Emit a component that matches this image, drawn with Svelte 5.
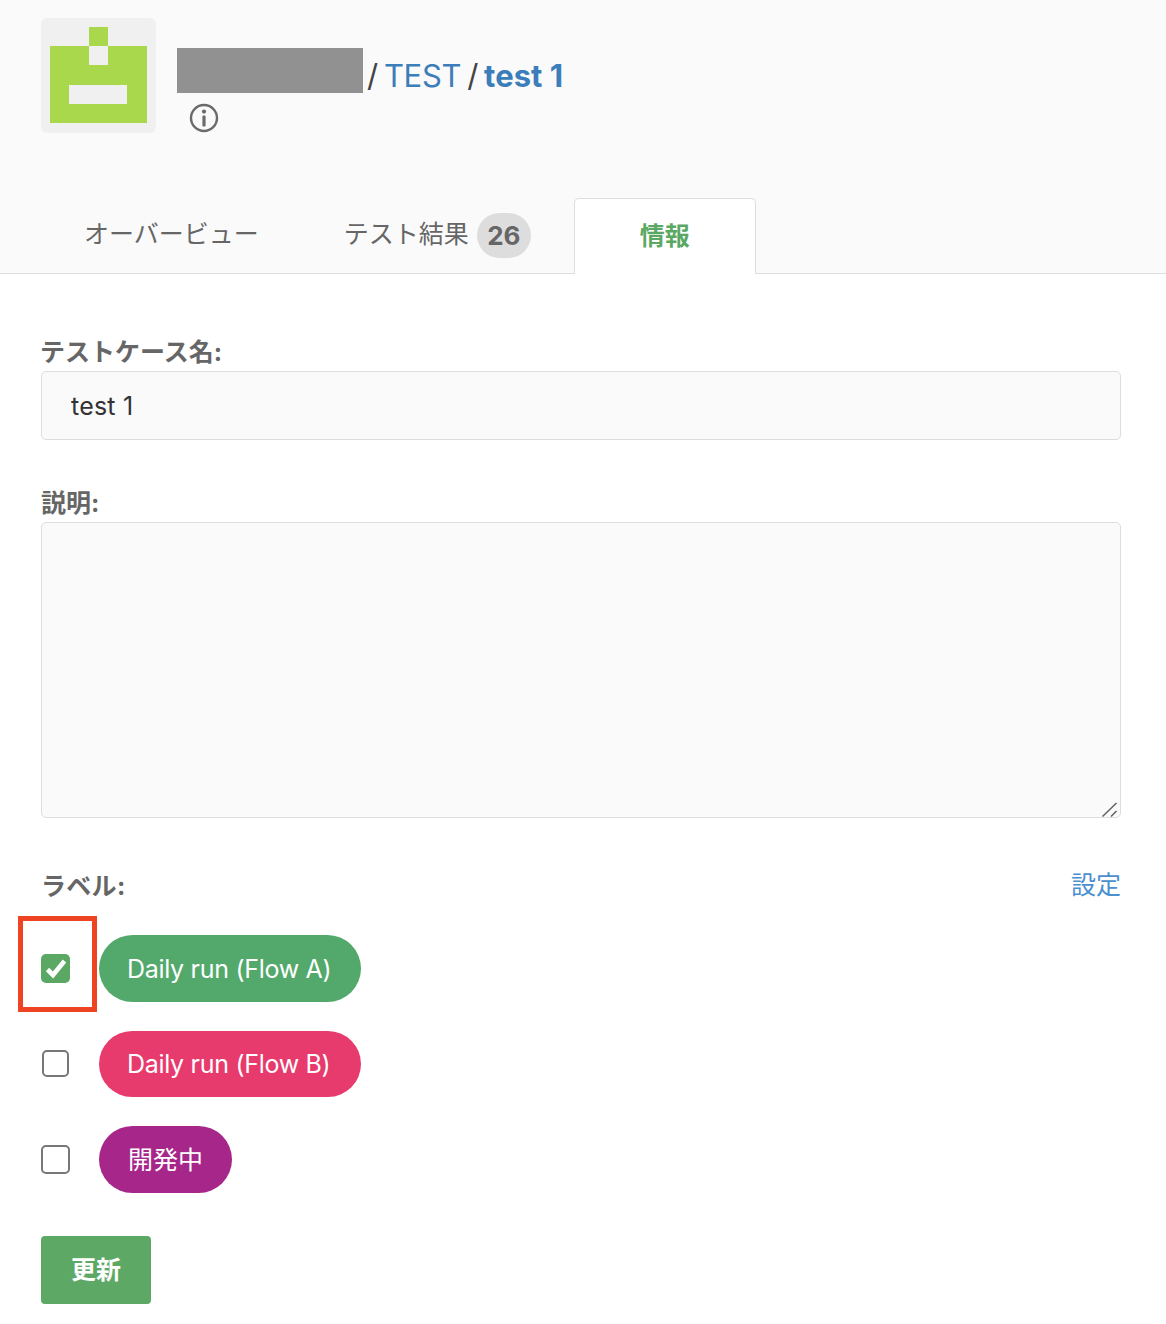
<script>
  const labels = [
    { name: 'Daily run (Flow A)', color: 'green', checked: true, latin: true },
    { name: 'Daily run (Flow B)', color: 'pink', checked: false, latin: true },
    { name: '開発中', color: 'purple', checked: false, latin: false }
  ];
</script>

<div class="page">
  <header class="head">
    <div class="top">
      <div class="avatar">
        <svg width="97" height="96" viewBox="0 0 97 96" shape-rendering="crispEdges">
          <path fill="#a9d84c" d="M39 0h19v19H39zM0 19h39v19h19V19h39v77H0zM19 58v19h58V58z" />
        </svg>
      </div>
      <div class="titles">
        <div class="crumbs">
          <span class="redact"></span>
          <span class="path">
            <span class="sep">/</span>
            <span class="link">TEST</span>
            <span class="sep">/</span>
            <span class="link strong">test 1</span>
          </span>
        </div>
        <svg class="info" width="30" height="30" viewBox="0 0 30 30">
          <circle cx="15" cy="15" r="13" fill="none" stroke="#6b6b6b" stroke-width="2.4" />
          <circle cx="15" cy="8.6" r="2.1" fill="#6b6b6b" />
          <rect x="13.4" y="12.5" width="3.2" height="11" rx="1" fill="#6b6b6b" />
        </svg>
      </div>
    </div>
    <nav class="tabs">
      <div class="tab">オーバービュー</div>
      <div class="tab">テスト結果<span class="count">26</span></div>
      <div class="tab active">情報</div>
    </nav>
  </header>

  <main class="form">
    <label class="lbl first" for="name">テストケース名:</label>
    <input id="name" class="field" value="test 1" />

    <label class="lbl second" for="desc">説明:</label>
    <div class="areawrap">
      <textarea id="desc" class="field area"></textarea>
      <svg class="grip" width="18" height="18" viewBox="0 0 18 18">
        <path d="M1.5 16.5L15.5 3M10 16.5L15.5 11" stroke="#666" stroke-width="1.6" fill="none" />
      </svg>
    </div>

    <div class="lblrow">
      <span class="lbl plain">ラベル:</span>
      <span class="cfg">設定</span>
    </div>

    <div class="rows">
      {#each labels as l, i}
        <div class="row" class:mid={i === 1}>
          <span class="box" class:on={l.checked}>
            {#if l.checked}
              <svg width="29" height="29" viewBox="0 0 29 29">
                <path d="M6.5 15.5L12 21L23.5 7" fill="none" stroke="#fff" stroke-width="4.6" />
              </svg>
              <span class="mark"></span>
            {/if}
          </span>
          <span class="pill {l.color}" class:latin={l.latin}>
            <span class:cjk={!l.latin}>{l.name}</span>
          </span>
        </div>
      {/each}
    </div>

    <button class="submit">更新</button>
  </main>
</div>

<style>
  :global(body) {
    margin: 0;
    background: #fff;
  }
  .page {
    font-family: Inter, "Noto Sans CJK JP", sans-serif;
    color: #333;
    width: 1166px;
  }
  .head {
    background: #fafafa;
    height: 273px;
    border-bottom: 1px solid #ddd;
    display: flex;
    flex-direction: column;
    justify-content: space-between;
    box-sizing: content-box;
  }
  .top {
    display: flex;
    padding: 18px 41px 0;
    gap: 21px;
  }
  .avatar {
    width: 115px;
    height: 115px;
    background: #f0f0f0;
    border-radius: 6px;
    display: flex;
    justify-content: center;
    padding-top: 9px;
    box-sizing: border-box;
  }
  .titles {
    padding-top: 30px;
  }
  .crumbs {
    display: flex;
    align-items: center;
    gap: 4px;
    font-size: 31px;
    height: 45px;
    letter-spacing: -0.3px;
  }
  .path {
    display: flex;
    gap: 6px;
    padding-top: 9px;
  }
  .redact {
    width: 186px;
    height: 45px;
    background: #919191;
  }
  .link {
    color: #3c7eb9;
  }
  .strong {
    font-weight: 700;
    letter-spacing: 0;
  }
  .sep {
    color: #444;
  }
  .info {
    display: block;
    margin: 10px 0 0 12px;
  }
  .tabs {
    display: flex;
    height: 76px;
    padding-left: 41px;
    margin-bottom: -1px;
    font-size: 25px;
    color: #666;
  }
  .tab {
    padding: 0 43px;
    display: flex;
    align-items: center;
    height: 72px;
    line-height: 72px;
    white-space: nowrap;
  }
  .tab:nth-child(2) {
    padding-right: 43px;
    padding-left: 42px;
  }
  .count {
    width: 54px;
    height: 45px;
    margin-left: 8px;
    margin-top: 2px;
    border-radius: 23px;
    background: #ddd;
    font-size: 26px;
    font-weight: 700;
    line-height: 45px;
    text-align: center;
    color: #666;
  }
  .active {
    box-sizing: border-box;
    width: 182px;
    height: 76px;
    justify-content: center;
    padding: 0 0 2px;
    background: #fff;
    border: 1px solid #ddd;
    border-bottom: 0;
    border-radius: 5px 5px 0 0;
    color: #5aa864;
    font-weight: 700;
  }
  .form {
    padding: 0 45px 0 41px;
  }
  .lbl {
    display: block;
    font-size: 25px;
    font-weight: 700;
    color: #666;
    line-height: 34px;
  }
  .first {
    margin-top: 61px;
    margin-bottom: 2px;
    margin-left: -1px;
  }
  .second {
    margin-top: 46px;
    margin-bottom: 2px;
  }
  .plain {
    letter-spacing: 0.3px;
  }
  .field {
    display: block;
    box-sizing: border-box;
    width: 1080px;
    height: 69px;
    padding: 0 29px;
    background: #fafafa;
    border: 1px solid #ddd;
    border-radius: 5px;
    font-family: inherit;
    font-size: 25px;
    letter-spacing: 0.2px;
    color: #333;
    outline: none;
    margin: 0;
  }
  .areawrap {
    position: relative;
  }
  .area {
    height: 296px;
    resize: none;
  }
  .grip {
    position: absolute;
    right: 2px;
    bottom: 0;
  }
  .lblrow {
    display: flex;
    justify-content: space-between;
    align-items: center;
    margin-top: 51px;
    height: 34px;
  }
  .cfg {
    color: #4a8fd0;
    font-size: 25px;
    margin-bottom: 6px;
  }
  .rows {
    margin-top: 32px;
    display: flex;
    flex-direction: column;
    gap: 29px;
  }
  .row {
    display: flex;
    align-items: center;
    height: 67px;
  }
  .row.mid {
    height: 66px;
  }
  .box {
    box-sizing: border-box;
    width: 29px;
    height: 29px;
    margin-right: 29px;
    border: 2px solid #777;
    border-radius: 5px;
    background: #fff;
    display: block;
  }
  .row.mid .box {
    width: 27px;
    height: 27px;
    margin-left: 1px;
    margin-right: 30px;
    margin-bottom: 1px;
  }
  .box.on {
    background: #5aa864;
    border: 0;
    position: relative;
  }
  .box svg {
    display: block;
  }
  .mark {
    position: absolute;
    left: -23px;
    top: -38px;
    width: 79px;
    height: 96px;
    box-sizing: border-box;
    border: 5px solid #ee4423;
  }
  .pill {
    height: 100%;
    display: flex;
    align-items: center;
    padding: 0 29px;
    border-radius: 34px;
    color: #fff;
    font-size: 25px;
    white-space: nowrap;
  }
  .pill.latin {
    letter-spacing: -0.3px;
    width: 262px;
    box-sizing: border-box;
    padding: 0 0 0 28px;
  }
  .cjk {
    padding-bottom: 4px;
  }
  .green { background: #52a96b; }
  .pink { background: #e73a6d; }
  .purple { background: #a6268a; }
  .submit {
    display: block;
    margin-top: 43px;
    width: 110px;
    height: 68px;
    background: #5ca864;
    border: 0;
    border-radius: 4px;
    color: #fff;
    font-family: inherit;
    font-size: 25px;
    font-weight: 700;
    padding: 0 0 4px;
  }
</style>
